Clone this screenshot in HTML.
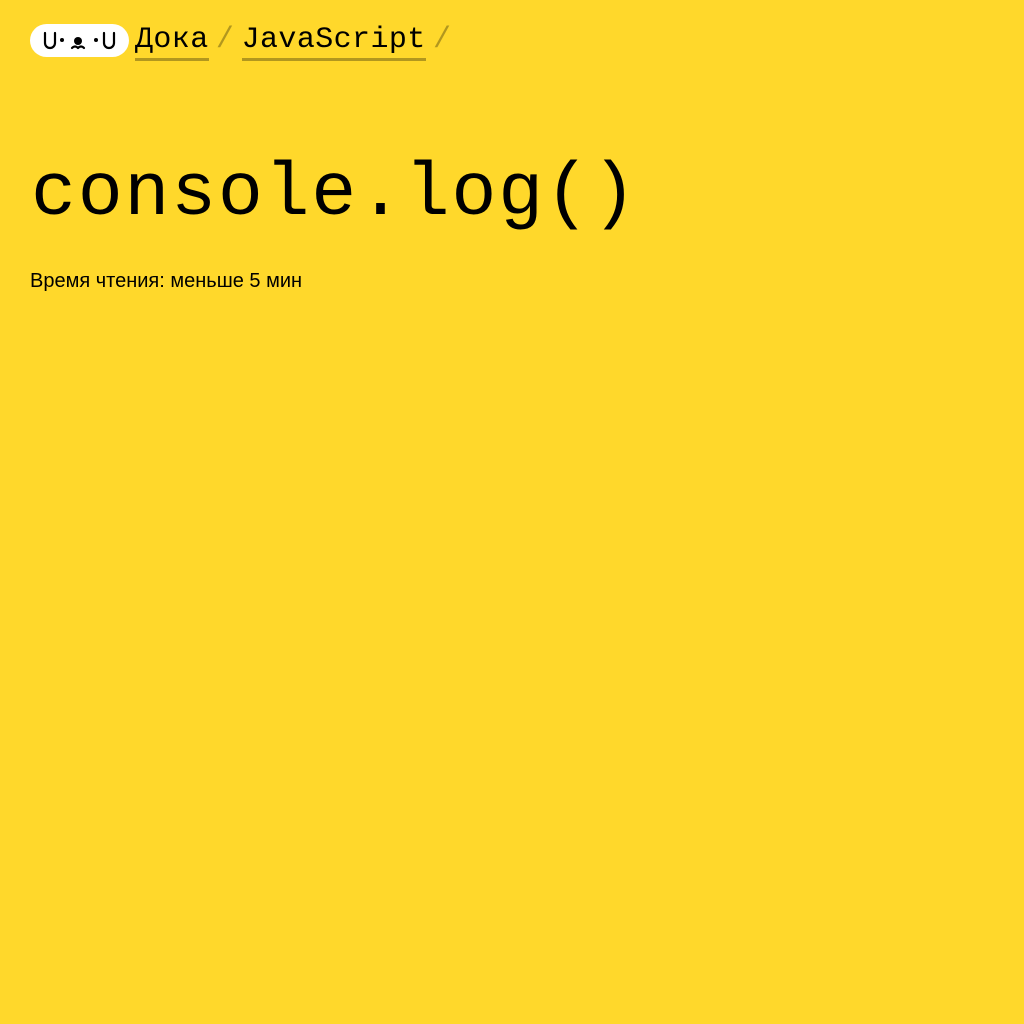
<!DOCTYPE html>
<html><head><meta charset="utf-8"><style>
body{margin:0;background:#ffd82b;width:1024px;height:1024px;overflow:hidden;font-family:"Liberation Sans",sans-serif;color:#000}
.nav{position:absolute;top:22px;left:30px;height:40px;display:flex;align-items:flex-start;font-family:"Liberation Mono",monospace;font-size:30px;letter-spacing:0.4px}
.logo{width:99px;height:33px;margin-top:2px;background:#fff;border-radius:17px;position:relative}
.crumb{line-height:36px;border-bottom:3px solid rgba(0,0,0,0.3);}
.sl{color:rgba(0,0,0,0.3);line-height:36px;width:33px;text-align:center}
h1{position:absolute;left:31px;top:145px;margin:0;font-family:"Liberation Mono",monospace;font-weight:normal;font-size:75px;line-height:100px;letter-spacing:1.7px}
.rt{position:absolute;left:30px;top:270px;font-size:20px}
</style></head><body>
<div class="nav">
<div class="logo"><svg width="99" height="33" viewBox="0 0 99 33">
<g fill="none" stroke="#000" stroke-width="2.2" stroke-linecap="round">
<path d="M15 9v10a5 5 0 0 0 10 0V9"/><path d="M74 9v10a5 5 0 0 0 10 0V9"/>
<path d="M42 24q3-3 6 0"/><path d="M48 24q3-3 6 0"/></g>
<circle cx="32" cy="16" r="2" fill="#000"/><circle cx="66" cy="16" r="2" fill="#000"/>
<circle cx="48" cy="17" r="4" fill="#000"/></svg></div>
<span style="width:6px"></span>
<span class="crumb">Дока</span><span class="sl">/</span><span class="crumb">JavaScript</span><span class="sl">/</span>
</div>
<h1>console.log()</h1>
<div class="rt">Время чтения: меньше 5 мин</div>
</body></html>
